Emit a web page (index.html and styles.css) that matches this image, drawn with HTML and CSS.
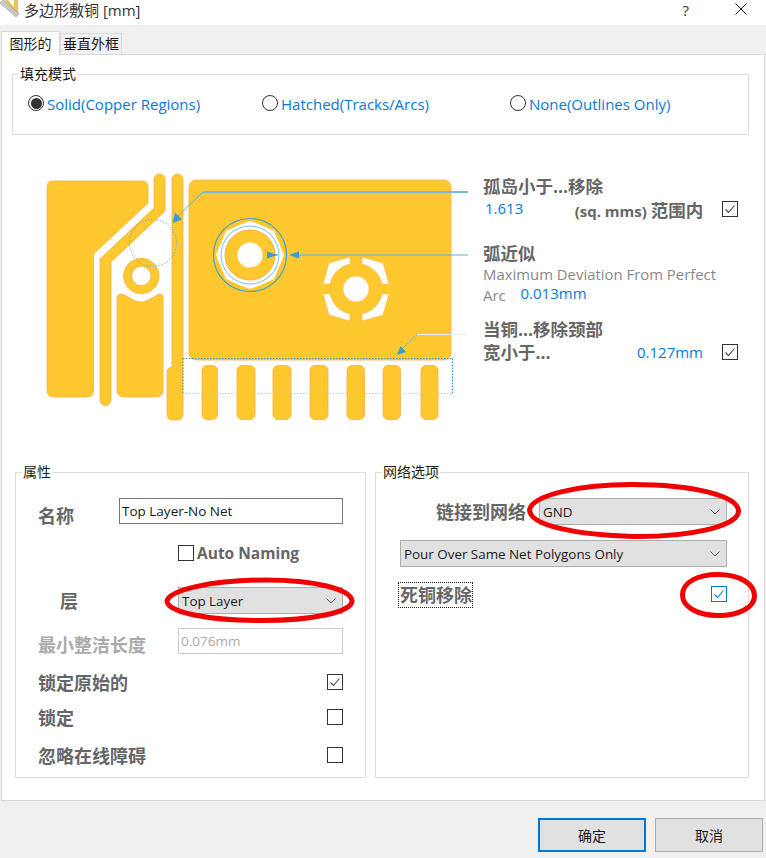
FILE: index.html
```html
<!DOCTYPE html>
<html lang="zh-CN">
<head>

    <meta charset="UTF-8">
    <meta name="viewport" content="width=device-width, initial-scale=1.0">
    <title>多边形敷铜</title>

    <link rel="stylesheet" href="styles.css">

</head>

<body>

    <div class="titlebar">
        <svg class="title-icon" width="20" height="20" viewBox="0 0 20 20">
            <path d="M3 0 H18 V16 Z" fill="#e8c25a"/>
            <path d="M8 1 H14 V8 Z" fill="#fff"/>
            <path d="M0 4 L3 1 L19 15 L16 18 Z" fill="#c9c9c9" stroke="#9a9a9a" stroke-width="0.6"/>
        </svg>
        <span class="title-text">多边形敷铜 [mm]</span>
        <span class="title-help">?</span>
        <svg class="title-close" width="12" height="12" viewBox="0 0 12 12">
            <path d="M0.5 0.5 L11.5 11.5 M11.5 0.5 L0.5 11.5" stroke="#222" stroke-width="1" fill="none"/>
        </svg>
    </div>

    <div class="tabs">
        <div class="tab tab-active">图形的</div>
        <div class="tab">垂直外框</div>
    </div>

    <div class="panel">

        <fieldset class="group fill-group">
            <legend>填充模式</legend>
            <div class="fill-options">
                <label class="radio-item solid"><span class="radio radio-on"></span>Solid(Copper Regions)</label>
                <label class="radio-item hatched"><span class="radio"></span>Hatched(Tracks/Arcs)</label>
                <label class="radio-item none"><span class="radio"></span>None(Outlines Only)</label>
            </div>
        </fieldset>

        <div class="preview">

            <svg class="board" width="440" height="260" viewBox="30 165 440 260">
                <g class="copper">
                    <path d="M53 181 H142 Q148 181 148 187 V203 L93.5 254 V390 Q93.5 397 87 397 H54 Q47 397 47 390 V187 Q47 181 53 181 Z"/>
                    <path d="M154 179.5 a5.5 5.5 0 0 1 11 0 V211 L111 262 V400 a5.5 5.5 0 0 1 -11 0 V259 L154 208 Z"/>
                    <path d="M172 179.5 a5.5 5.5 0 0 1 11 0 V414 q0 6 -6 6 h-4 q-6 0 -6 -6 V372 q0 -4 5 -5 Z"/>
                    <path fill-rule="evenodd" d="M123.6 276 a17.7 17.7 0 1 0 35.4 0 a17.7 17.7 0 1 0 -35.4 0 Z M131.6 276 a9.7 9.7 0 1 0 19.4 0 a9.7 9.7 0 1 0 -19.4 0 Z"/>
                    <path d="M121 294 Q124 294 128 297 Q136 302 141 302 Q146 302 154 297 Q158 294 160 294 Q163 294 163 298 V390 Q163 397 156 397 H124 Q117 397 117 390 V298 Q117 294 121 294 Z"/>
                    <rect x="189" y="180" width="262" height="180" rx="7"/>
                    <rect x="202" y="365.5" width="15.5" height="54" rx="5"/>
                    <rect x="237" y="365.5" width="18" height="54" rx="5"/>
                    <rect x="273" y="365.5" width="18" height="54" rx="5"/>
                    <rect x="310" y="365.5" width="18" height="54" rx="5"/>
                    <rect x="347" y="365.5" width="17.5" height="54" rx="5"/>
                    <rect x="383" y="365.5" width="17.5" height="54" rx="5"/>
                    <rect x="421" y="365.5" width="17" height="54" rx="5"/>
                </g>

                <polygon fill="#fff" points="250,221 263,226 274,231 279,243 284,255 279,267 274,279 263,284 250,289 237,284 226,279 221,267 216,255 221,243 226,231 237,226"/>
                <circle cx="250" cy="255" r="29" fill="none" stroke="#7cc0e4" stroke-width="1"/>
                <circle cx="250" cy="255" r="25" fill="#ffc82e" stroke="#fbad3f"/>
                <circle cx="250" cy="255" r="12.6" fill="#fff"/>
                <circle cx="250" cy="255" r="36.5" fill="none" stroke="#3b9fd6" stroke-width="1.2"/>

                <g fill="#fff" stroke="#fbad3f" stroke-width="0.5">
                    <circle cx="356" cy="289" r="13"/>
                    <path d="M350 257 V264 A26 26 0 0 0 330 284 H323 L329 263 Z"/>
                    <path d="M362 257 V264 A26 26 0 0 1 382 284 H389 L383 263 Z"/>
                    <path d="M350 321 V314 A26 26 0 0 1 330 294 H323 L329 315 Z"/>
                    <path d="M362 321 V314 A26 26 0 0 0 382 294 H389 L383 315 Z"/>
                </g>

                <circle cx="153" cy="243" r="23.5" class="dots" stroke="#5fb0dc"/>
                <path d="M183 358.5 H452.5" class="dots" stroke="#3b9fd6" stroke-width="1.4"/>
                <path d="M452.5 358.5 V393.5" class="dots" stroke="#3b9fd6" stroke-width="1.4"/>
                <path d="M183 358.5 V393.5" class="dots" stroke="#4aa5da"/>
                <path d="M183 393.5 H452.5" class="dots" stroke="#a8d4ea" stroke-width="1.2"/>

                <path d="M468 192 H203" fill="none" stroke="#7ab9d8" stroke-width="2"/>
                <path d="M203 192 L177 217" fill="none" stroke="#5cb0de" stroke-width="1"/>
                <path d="M172.5 223 L175 212.5 L182 219.5 Z" fill="#3a9bd5"/>
                <path d="M468 255 H295" fill="none" stroke="#5cb0de" stroke-width="1"/>
                <path d="M289 255 L299 251.5 V258.5 Z" fill="#3a9bd5"/>
                <path d="M267 255 H278" fill="none" stroke="#3a9bd5" stroke-width="1"/>
                <path d="M277.5 255 L267 251.5 V258.5 Z" fill="#3a9bd5"/>
                <path d="M467 334.5 H417" fill="none" stroke="#dcedf5" stroke-width="1"/>
                <path d="M417 334.5 L401 350" fill="none" stroke="#5cb0de" stroke-width="1" stroke-dasharray="2 1"/>
                <path d="M397 355 L400.5 346 L406 352 Z" fill="#3a9bd5"/>
            </svg>

            <div class="notes">
                <div class="note first-note">
                    <div class="note-title">孤岛小于...移除</div>
                    <div class="note-row">
                        <span class="value island-value">1.613</span>
                        <span class="unit">(sq. mms) <span class="unit-cjk">范围内</span></span>
                        <span class="check"><svg width="14" height="14" viewBox="0 0 14 14"><path d="M2.5 7.5 L5.5 10.5 L11.5 3.5" fill="none" stroke="#444" stroke-width="1.1"/></svg></span>
                    </div>
                </div>
                <div class="note arc-note">
                    <div class="note-title">弧近似</div>
                    <div class="note-desc">Maximum Deviation From Perfect</div>
                    <div class="note-desc">Arc <span class="value arc-value">0.013mm</span></div>
                </div>
                <div class="note neck-note">
                    <div class="note-title">当铜...移除颈部</div>
                    <div class="note-row">
                        <span class="note-title">宽小于...</span>
                        <span class="value neck-value">0.127mm</span>
                        <span class="check"><svg width="14" height="14" viewBox="0 0 14 14"><path d="M2.5 7.5 L5.5 10.5 L11.5 3.5" fill="none" stroke="#444" stroke-width="1.1"/></svg></span>
                    </div>
                </div>
            </div>

        </div>

        <div class="bottom-groups">

            <fieldset class="group props">
                <legend>属性</legend>
                <div class="prop-row name-row">
                    <span class="prop-label low-label name-label">名称</span>
                    <div class="text-box">Top Layer-No Net</div>
                </div>
                <div class="auto-row">
                    <span class="check"></span>
                    <span class="auto-label">Auto Naming</span>
                </div>
                <div class="prop-row layer-row">
                    <span class="prop-label layer-label">层</span>
                    <div class="combo">Top Layer<svg class="chevron" width="10" height="6" viewBox="0 0 10 6"><path d="M0.5 0.5 L5 5 L9.5 0.5" fill="none" stroke="#555" stroke-width="1"/></svg></div>
                </div>
                <div class="prop-row min-row">
                    <span class="prop-label low-label disabled-label">最小整洁长度</span>
                    <div class="text-box disabled-box">0.076mm</div>
                </div>
                <div class="check-row lock-prim">
                    <span class="prop-label">锁定原始的</span>
                    <span class="check"><svg width="14" height="14" viewBox="0 0 14 14"><path d="M2.5 7.5 L5.5 10.5 L11.5 3.5" fill="none" stroke="#444" stroke-width="1.1"/></svg></span>
                </div>
                <div class="check-row lock">
                    <span class="prop-label">锁定</span>
                    <span class="check"></span>
                </div>
                <div class="check-row ignore">
                    <span class="prop-label">忽略在线障碍</span>
                    <span class="check"></span>
                </div>
            </fieldset>

            <fieldset class="group net">
                <legend>网络选项</legend>
                <div class="net-row">
                    <span class="prop-label">链接到网络</span>
                    <div class="combo net-combo">GND<svg class="chevron" width="10" height="6" viewBox="0 0 10 6"><path d="M0.5 0.5 L5 5 L9.5 0.5" fill="none" stroke="#555" stroke-width="1"/></svg></div>
                </div>
                <div class="combo pour-combo">Pour Over Same Net Polygons Only<svg class="chevron" width="10" height="6" viewBox="0 0 10 6"><path d="M0.5 0.5 L5 5 L9.5 0.5" fill="none" stroke="#555" stroke-width="1"/></svg></div>
                <div class="dead-row">
                    <span class="prop-label dead-label">死铜移除</span>
                    <span class="check check-blue"><svg width="14" height="14" viewBox="0 0 14 14"><path d="M2.5 7.5 L5.5 10.5 L11.5 3.5" fill="none" stroke="#0078d7" stroke-width="1.1"/></svg></span>
                </div>
            </fieldset>

        </div>

    </div>

    <div class="footer">
        <button class="btn btn-default">确定</button>
        <button class="btn">取消</button>
    </div>

    <!-- red marks drawn by hand on top of the screenshot -->
    <svg class="marks" width="766" height="858" viewBox="0 0 766 858">
        <path d="M167 601 C169 590 212 580 266 580 C314 580 351 589 352 601 C352 612 312 621 258 620.5 C206 620 167 612 167 601 Z"/>
        <path d="M529.5 510 C532 495 580 484.5 632 484.5 C694 484.5 738 496 738.5 511 C739 526 690 537 634 536.5 C578 535 530 526 529.5 510 Z"/>
        <path d="M682.5 595 C682.5 582 698 574.5 718 574.5 C740 574.5 754.5 584 754.5 596 C754.5 608 738 615.5 718 615.5 C698 615.5 682.5 607 682.5 595 Z"/>
    </svg>

</body>
</html>
```

FILE: styles.css
```css
* {
    box-sizing: border-box;
}

body {

    margin: 0;
    width: 766px;
    height: 858px;
    position: relative;
    overflow: hidden;
    background-color: #f0f0f0;
    font-family: "Open Sans", "Noto Sans CJK SC", sans-serif;
    font-size: 14px;
    color: #1a1a1a;

}

.titlebar {

    height: 25px;
    padding-bottom: 4.5px;
    background-color: #fff;
    display: flex;
    align-items: center;
    font-size: 15px;
    line-height: 17px;

}

.title-icon {

    align-self: flex-start;
    margin-top: -1px;
    flex: none;

}

.title-text {

    margin-left: 4px;
    color: #333;

}

.title-help {

    margin-left: auto;
    margin-right: 46px;
    color: #333;

}

.title-close {

    margin-right: 19px;
    margin-bottom: 3px;

}

.tabs {

    height: 30px;
    padding-left: 1px;
    display: flex;
    align-items: flex-end;
    position: relative;
    z-index: 1;

}

.tab {

    width: 62px;
    height: 22px;
    margin-bottom: 0;
    border: 1px solid #d9d9d9;
    border-bottom: none;
    text-align: center;
    font-size: 14px;
    line-height: 20px;

}

.tab-active {

    width: 59px;
    height: 25px;
    background-color: #fff;
    margin-bottom: -1px;
    line-height: 24px;
    border-right: 1px solid #d9d9d9;

}

.panel {

    height: 747px;
    margin: -1px 1px 0 1px;
    background-color: #fff;
    border: 1px solid #d9d9d9;

}

.group {

    margin: 0;
    padding: 0;
    border: 1px solid #dcdcdc;
    min-width: 0;

}

.group legend {

    margin-left: 6px;
    padding: 0 1px;
    font-size: 14px;
    line-height: 16px;
    color: #1a1a1a;

}

.fill-group {

    height: 69px;
    width: 737px;
    margin: 11px 0 0 10px;

}

.fill-options {

    display: flex;
    padding-top: 12px;
    color: #0a78d7;
    font-size: 15px;

}

.radio-item {

    display: flex;
    align-items: center;
    gap: 3px;

}

.solid {

    margin-left: 15px;
    width: 234px;

}

.hatched {

    width: 248px;

}

.radio {

    width: 16px;
    height: 16px;
    border: 1px solid #333;
    border-radius: 50%;
    background-color: #fff;
    display: inline-block;
    margin-top: -2px;
    position: relative;

}

.radio-on::after {

    content: "";
    position: absolute;
    left: 1.5px;
    top: 1.5px;
    width: 11px;
    height: 11px;
    border-radius: 50%;
    background-color: #333;

}

.preview {

    height: 305px;
    display: flex;
    margin-top: 24px;

}

.board {

    margin-left: 28px;
    margin-top: 6px;
    flex: none;

}

.copper {

    fill: #ffc82e;
    stroke: #fbad3f;
    stroke-width: 0.8;

}

.dots {

    fill: none;
    stroke-width: 1;
    stroke-dasharray: 1.5 1.5;

}

.notes {

    width: 255px;
    margin-left: 13px;
    padding-top: 16px;

}

.note-title {

    font-size: 17.5px;
    font-weight: 700;
    line-height: 22px;
    color: #666;

}

.note-row {

    display: flex;
    align-items: center;
    height: 22px;
    margin-top: 1px;

}

.value {

    color: #0a78d7;
    font-size: 15px;

}

.island-value {

    margin-left: 2px;
    width: 90px;
    margin-top: -2px;

}

.unit {

    font-size: 15px;
    font-weight: 700;
    color: #666;
    width: 148px;

}

.unit-cjk {

    font-size: 17.5px;

}

.check {

    width: 16px;
    height: 16px;
    border: 1px solid #333;
    background-color: #fff;
    flex: none;
    display: inline-flex;
    align-items: center;
    justify-content: center;

}

.arc-note {

    margin-top: 22px;

}

.note-desc {

    font-size: 14.9px;
    line-height: 21px;
    color: #888;

}

.arc-value {

    margin-left: 11px;
    display: inline-block;
    vertical-align: 2px;
    line-height: 17px;

}

.neck-note {

    margin-top: 12px;

}

.neck-value {

    margin-left: auto;
    margin-right: 19px;

}

.bottom-groups {

    display: flex;
    gap: 9px;
    margin: 0 0 0 13px;

}

.props {

    width: 351px;
    height: 314px;
    padding: 0 22px;

}

.net {

    width: 374px;
    height: 314px;
    padding: 0 21px 0 24px;

}

.props legend {

    margin-left: -16px;

}

.net legend {

    margin-left: -18px;

}

.prop-label {

    font-size: 18px;
    font-weight: 700;
    color: #666;
    line-height: 24px;

}

.prop-row {

    display: flex;
    align-items: center;
    justify-content: space-between;

}

.name-row {

    height: 26px;
    margin-top: 18px;

}

.low-label {

    align-self: flex-start;
    margin-top: 5px;

}

.name-label {

    margin-top: 6px;

}

.text-box {

    height: 26px;
    border: 1px solid #767676;
    background-color: #fff;
    padding-left: 2px;
    line-height: 24px;
    font-size: 13.5px;
    width: 224px;

}

.auto-row {

    display: flex;
    align-items: center;
    gap: 3px;
    margin: 18px 0 0 140px;

}

.auto-label {

    font-size: 15.5px;
    font-weight: 700;
    color: #666;

}

.combo {

    display: flex;
    align-items: center;
    justify-content: space-between;
    height: 27px;
    padding: 0 6px 0 3px;
    background-color: #e1e1e1;
    border: 1px solid #adadad;
    font-size: 13.4px;

}

.layer-row .combo {

    width: 165px;

}

.layer-row {

    margin-top: 23px;

}

.layer-label {

    margin-left: 22px;

}

.min-row {

    height: 26px;
    margin-top: 14px;

}

.disabled-label {

    color: #aaa;

}

.disabled-box {

    width: 165px;
    border-color: #ccc;
    color: #aaa;

}

.check-row {

    display: flex;
    align-items: center;
    justify-content: space-between;

}

.check-row .check {

    margin-top: -2px;

}

.lock-prim {

    margin-top: 17px;

}

.lock {

    margin-top: 11px;

}

.ignore {

    margin-top: 14px;

}

.net-row {

    display: flex;
    align-items: center;
    justify-content: flex-end;
    gap: 13px;
    margin-top: 18px;

}

.net-combo {

    width: 188px;

}

.pour-combo {

    margin-top: 15px;

}

.dead-row {

    display: flex;
    align-items: center;
    justify-content: space-between;
    margin-top: 16px;

}

.dead-label {

    outline: 1px dotted #222;
    margin-left: -1px;
    padding-left: 1px;

}

.check-blue {

    border-color: #0078d7;
    margin-top: -2px;

}

.chevron {

    flex: none;

}

.footer {

    display: flex;
    justify-content: flex-end;
    gap: 9px;
    padding: 17px 3px 0 0;

}

.btn {

    width: 108px;
    height: 34px;
    background-color: #e1e1e1;
    border: 1px solid #adadad;
    font-family: inherit;
    font-size: 14px;
    color: #1a1a1a;
    padding: 0;

}

.btn-default {

    border: 2px solid #0078d7;

}

.marks {

    position: absolute;
    left: 0;
    top: 0;
    pointer-events: none;

}

.marks path {

    fill: none;
    stroke: #f00000;
    stroke-width: 5;

}
```
